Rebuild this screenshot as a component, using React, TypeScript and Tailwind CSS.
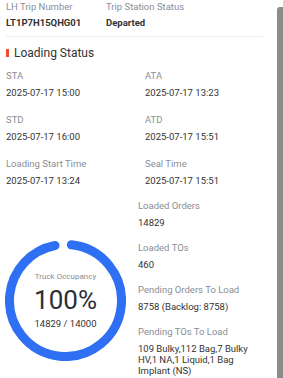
const timeRows = [
  [
    { label: "STA", value: "2025-07-17 15:00" },
    { label: "ATA", value: "2025-07-17 13:23" },
  ],
  [
    { label: "STD", value: "2025-07-17 16:00" },
    { label: "ATD", value: "2025-07-17 15:51" },
  ],
  [
    { label: "Loading Start Time", value: "2025-07-17 13:24" },
    { label: "Seal Time", value: "2025-07-17 15:51" },
  ],
];

const loadStats = [
  { label: "Loaded Orders", value: "14829" },
  { label: "Loaded TOs", value: "460" },
  { label: "Pending Orders To Load", value: "8758 (Backlog: 8758)" },
  {
    label: "Pending TOs To Load",
    value: "109 Bulky,112 Bag,7 Bulky HV,1 NA,1 Liquid,1 Bag Implant (NS)",
  },
];

const Field = ({ label, value }: { label: string; value: string }) => (
  <div>
    <p className="text-[9.5px] leading-[12px] text-[#8a8e96]">{label}</p>
    <p className="mt-[5px] text-[9.5px] leading-[12px] text-[#333]">{value}</p>
  </div>
);

const OccupancyRing = () => {
  const size = 121;
  const stroke = 9;
  const r = (size - stroke) / 2;
  const c = 2 * Math.PI * r;
  const dash = c - 17;

  return (
    <div className="relative h-[121px] w-[121px]">
      <svg width={size} height={size} className="absolute inset-0">
        <circle
          cx={size / 2}
          cy={size / 2}
          r={r}
          fill="none"
          stroke="#2f6ff4"
          strokeWidth={stroke}
          strokeLinecap="round"
          strokeDasharray={`${dash} ${c}`}
          transform={`rotate(-84 ${size / 2} ${size / 2})`}
        />
      </svg>
      <div className="relative flex h-full flex-col items-center justify-center">
        <span className="text-[8px] leading-[10px] text-[#8a8e96]">Truck Occupancy</span>
        <span className="mt-[3px] text-[26px] leading-[30px] text-[#2b2f36]">100%</span>
        <span className="mt-[3px] text-[9.5px] leading-[12px] text-[#333]">14829 / 14000</span>
      </div>
    </div>
  );
};

export default function App() {
  return (
    <div className="flex h-[378px] w-[283px] overflow-hidden bg-white font-['Roboto',sans-serif]">
      <div className="flex-1 pl-[6px] pr-[14px]">
        <div className="flex pt-px">
          <div className="w-[100px]">
            <p className="text-[9.5px] leading-[12px] text-[#8a8e96]">LH Trip Number</p>
            <p className="mt-[4px] text-[9.5px] font-bold leading-[12px] text-[#333]">LT1P7H15QHG01</p>
          </div>
          <div>
            <p className="text-[9.5px] leading-[12px] text-[#8a8e96]">Trip Station Status</p>
            <p className="mt-[4px] text-[9.5px] font-bold leading-[12px] text-[#333]">Departed</p>
          </div>
        </div>

        <div className="mt-[7px] h-px bg-[#ebebeb]" />

        <div className="mt-[9px] flex items-center gap-[5px]">
          <span className="h-[8px] w-[3px] bg-[#ee4d2d]" />
          <h2 className="text-[12px] leading-[14px] text-[#333]">Loading Status</h2>
        </div>

        <div className="mt-[10px] flex flex-col gap-[15px]">
          {timeRows.map((row, i) => (
            <div key={i} className="grid grid-cols-[139px_1fr]">
              {row.map((f) => (
                <Field key={f.label} label={f.label} value={f.value} />
              ))}
            </div>
          ))}
        </div>

        <div className="mt-[13px] flex">
          <div className="-ml-px w-[133px] pt-[40px]">
            <OccupancyRing />
          </div>
          <div className="flex flex-1 flex-col gap-[14.5px]">
            {loadStats.map((s) => (
              <div key={s.label}>
                <p className="text-[9.5px] leading-[12px] text-[#8a8e96]">{s.label}</p>
                <p className="mt-[4.5px] text-[9.5px] leading-[11px] text-[#333]">{s.value}</p>
              </div>
            ))}
          </div>
        </div>
      </div>
      <div className="mt-[7px] w-[6px] rounded-tl-[3px] bg-[#8c8c8c]" />
    </div>
  );
}
